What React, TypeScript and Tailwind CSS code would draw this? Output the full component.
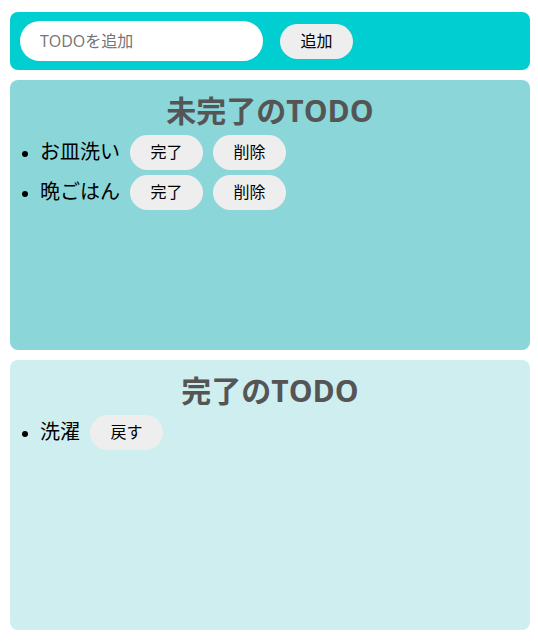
import React from "react";

const font = { fontFamily: '"Open Sans", "Noto Sans CJK JP", sans-serif' };

function Btn({ children }: { children: React.ReactNode }) {
  return (
    <button className="h-[35px] min-w-[73px] rounded-full bg-[#eeeeee] px-[20px] text-[16px] leading-none text-black">
      {children}
    </button>
  );
}

function Item({ text, buttons }: { text: string; buttons: string[] }) {
  return (
    <li className="list-disc">
      <div className="flex h-10 items-center gap-[10px]">
        <span className="text-[20px] leading-none text-black">{text}</span>
        {buttons.map((b) => (
          <Btn key={b}>{b}</Btn>
        ))}
      </div>
    </li>
  );
}

export default function App() {
  return (
    <div className="min-h-[641px] bg-white pt-[12px]" style={font}>
      <div className="ml-[10px] flex h-[58px] w-[520px] items-center rounded-[8px] bg-[#00ced1] pl-[10px]">
        <input
          placeholder="TODOを追加"
          className="h-[40px] w-[243px] rounded-full bg-white px-[20px] text-[16px] text-black placeholder:text-[#757575] outline-none"
        />
        <div className="ml-[17px]">
          <Btn>追加</Btn>
        </div>
      </div>
      <div className="ml-[10px] mt-[10px] h-[270px] w-[520px] rounded-[8px] bg-[#8ad6d9] pt-[10px]">
        <h2 className="text-center text-[30px] font-bold leading-[42px] text-[#555555]">未完了のTODO</h2>
        <ul className="pl-[30px]">
          <Item text="お皿洗い" buttons={["完了", "削除"]} />
          <Item text="晩ごはん" buttons={["完了", "削除"]} />
        </ul>
      </div>
      <div className="ml-[10px] mt-[10px] h-[270px] w-[520px] rounded-[8px] bg-[#cfeef0] pt-[10px]">
        <h2 className="text-center text-[30px] font-bold leading-[42px] text-[#555555]">完了のTODO</h2>
        <ul className="pl-[30px]">
          <Item text="洗濯" buttons={["戻す"]} />
        </ul>
      </div>
    </div>
  );
}
